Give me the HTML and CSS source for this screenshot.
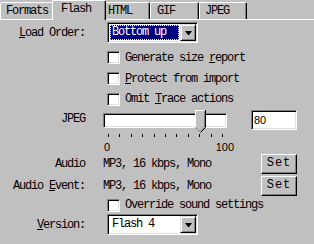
FILE: index.html
```html
<!DOCTYPE html>
<html lang="en">
<head>
  <meta charset="UTF-8">
  <title>Publish Settings</title>
  <link rel="stylesheet" href="styles.css">
</head>
<body>

  <div class="tabs">
    <div class="tab tab-formats">Formats</div>
    <div class="tab tab-flash">Flash</div>
    <div class="tab tab-html">HTML</div>
    <div class="tab tab-gif">GIF</div>
    <div class="tab tab-jpeg">JPEG</div>
  </div>

  <div class="panel">
    <div class="row row-load">
      <div class="label"><u>L</u>oad Order:</div>
      <div class="select">
        <div class="select-value focused">Bottom up</div>
        <div class="drop"><span class="arrow"></span></div>
      </div>
    </div>

    <div class="row row-check first">
      <div class="label"></div>
      <span class="check"></span><span>Generate size <u>r</u>eport</span>
    </div>
    <div class="row row-check">
      <div class="label"></div>
      <span class="check"></span><span><u>P</u>rotect from import</span>
    </div>
    <div class="row row-check last">
      <div class="label"></div>
      <span class="check"></span><span>Omit <u>T</u>race actions</span>
    </div>

    <div class="row row-slider">
      <div class="label">JPEG</div>
      <div class="slider">
        <div class="track"></div>
        <svg class="thumb" width="11" height="23" viewBox="0 0 11 23">
          <polygon points="0,0 10,0 10,17 5,22 0,17" fill="#c0c0c0"/>
          <polyline points="0.5,17 0.5,0.5 9.5,0.5" fill="none" stroke="#fff"/>
          <polyline points="10.5,0 10.5,17.5 5.5,22.5" fill="none" stroke="#000"/>
          <polyline points="9.5,1 9.5,17 5,21.5 0.5,17.5" fill="none" stroke="#808080"/>
        </svg>
        <div class="ticks">
          <i></i><i></i><i></i><i></i><i></i><i></i><i></i><i></i><i></i><i></i><i></i>
        </div>
        <div class="scale"><span>0</span><span>100</span></div>
      </div>
      <div class="num-input">80</div>
    </div>

    <div class="row row-audio">
      <div class="label">Audio</div>
      <div class="value">MP3, 16 kbps, Mono</div>
      <div class="button">Set</div>
    </div>
    <div class="row row-audio">
      <div class="label">Audio <u>E</u>vent:</div>
      <div class="value">MP3, 16 kbps, Mono</div>
      <div class="button">Set</div>
    </div>

    <div class="row row-override">
      <div class="label"></div>
      <span class="check"></span><span>Override sound settings</span>
    </div>

    <div class="row row-version">
      <div class="label"><u>V</u>ersion:</div>
      <div class="select">
        <div class="select-value">Flash 4</div>
        <div class="drop"><span class="arrow"></span></div>
      </div>
    </div>
  </div>

</body>
</html>
```

FILE: styles.css
```css
* {
  box-sizing: border-box;
}

body {
  margin: 0;
  background: #c0c0c0;
  color: #000;
  font-family: "Liberation Mono", monospace;
  font-size: 12px;
  line-height: 14px;
  letter-spacing: -1.2px;
  overflow: hidden;
}

/* tab strip */
.tabs {
  display: flex;
  align-items: flex-end;
  height: 19px;
}

.tab {
  height: 17px;
  padding-top: 1px;
  border: 1px solid;
  border-bottom: 0;
  border-color: #fff #000 #000 #fff;
  border-radius: 2px 2px 0 0;
  box-shadow: inset -1px 0 #808080;
}

.tab-formats { width: 54px; padding-left: 5px; }
.tab-html { width: 46px; padding-left: 3px; }
.tab-gif { width: 49px; padding-left: 6px; }
.tab-jpeg { width: 48px; padding-left: 5px; }

.tab-flash {
  width: 54px;
  height: 20px;
  margin: 0 -2px -1px;
  padding-top: 1px;
  padding-left: 8px;
  background: #c0c0c0;
  position: relative;
  z-index: 1;
}

/* page body */
.panel {
  border-top: 1px solid #fff;
  padding: 2px 17px 0 0;
}

.row {
  display: flex;
  align-items: center;
}

.label {
  width: 85px;
  flex: none;
  margin-right: 18px;
  text-align: right;
}

.row-load { height: 21px; }
.row-check { height: 21px; }
.row-check.first { margin-top: 4px; }
.row-check.last { height: 20px; }
.row-slider { height: 44px; align-items: flex-start; }
.row-slider .label { margin-top: 3px; }
.row-audio { height: 22px; }
.row-override { height: 14px; margin-top: 1px; }
.row-version { height: 21px; margin-top: 2px; }

/* combo box */
.select {
  width: 91px;
  height: 21px;
  margin-left: 4px;
  display: flex;
  padding: 1px;
  background: #fff;
  border: 1px solid;
  border-color: #808080 #fff #fff #808080;
  box-shadow: inset 1px 1px #000, inset -1px -1px #dfdfdf;
}

.select-value {
  flex: 1;
  margin: 1px;
  padding-left: 2px;
  line-height: 15px;
}

.select-value.focused {
  background: #000080;
  color: #fff;
  border: 1px dotted #ffff80;
  padding-left: 1px;
  line-height: 13px;
}

.drop {
  width: 16px;
  height: 17px;
  display: flex;
  align-items: center;
  justify-content: center;
  background: #c0c0c0;
  border: 1px solid;
  border-color: #dfdfdf #000 #000 #dfdfdf;
  box-shadow: inset 1px 1px #fff, inset -1px -1px #808080;
}

.arrow {
  width: 1px;
  height: 0;
  border-top: 4px solid #000;
  border-left: 3px solid transparent;
  border-right: 3px solid transparent;
  box-sizing: content-box;
}

/* check box */
.check {
  width: 13px;
  height: 13px;
  flex: none;
  margin: 0 5px 0 4px;
  background: #fff;
  border: 1px solid;
  border-color: #808080 #fff #fff #808080;
  box-shadow: inset 1px 1px #000, inset -1px -1px #dfdfdf;
}

/* trackbar */
.slider {
  width: 132px;
  height: 44px;
  flex: none;
  position: relative;
}

.track {
  width: 124px;
  height: 15px;
  margin-top: 4px;
  background: #fff;
  border: 1px solid;
  border-color: #808080 #fff #fff #808080;
  box-shadow: inset 1px 1px #000, inset -1px -1px #dfdfdf;
}

.thumb {
  position: absolute;
  left: 92px;
  top: 1px;
  display: block;
}

.ticks {
  display: flex;
  justify-content: space-between;
  width: 115px;
  height: 3px;
  margin: 6px 0 0 5px;
}

.ticks i {
  width: 1px;
  height: 3px;
  background: #000;
}

.scale {
  display: flex;
  justify-content: space-between;
  margin-top: 4px;
  padding: 0 1px;
  font-family: "Liberation Sans", Arial, sans-serif;
  font-size: 11px;
  line-height: 12px;
  letter-spacing: 0;
}

.num-input {
  width: 47px;
  height: 20px;
  margin: 1px 0 0 16px;
  background: #fff;
  border: 1px solid;
  border-color: #808080 #fff #fff #808080;
  box-shadow: inset 1px 1px #000, inset -1px -1px #dfdfdf;
  padding: 2px 0 0 2px;
  font-family: "Liberation Sans", Arial, sans-serif;
  font-size: 11px;
  line-height: 15px;
  letter-spacing: 0;
}

/* push button */
.button {
  width: 36px;
  height: 20px;
  margin-left: auto;
  border: 1px solid;
  border-color: #fff #000 #000 #fff;
  box-shadow: inset -1px -1px #808080;
  text-align: center;
  line-height: 17px;
  letter-spacing: 1px;
}
```
